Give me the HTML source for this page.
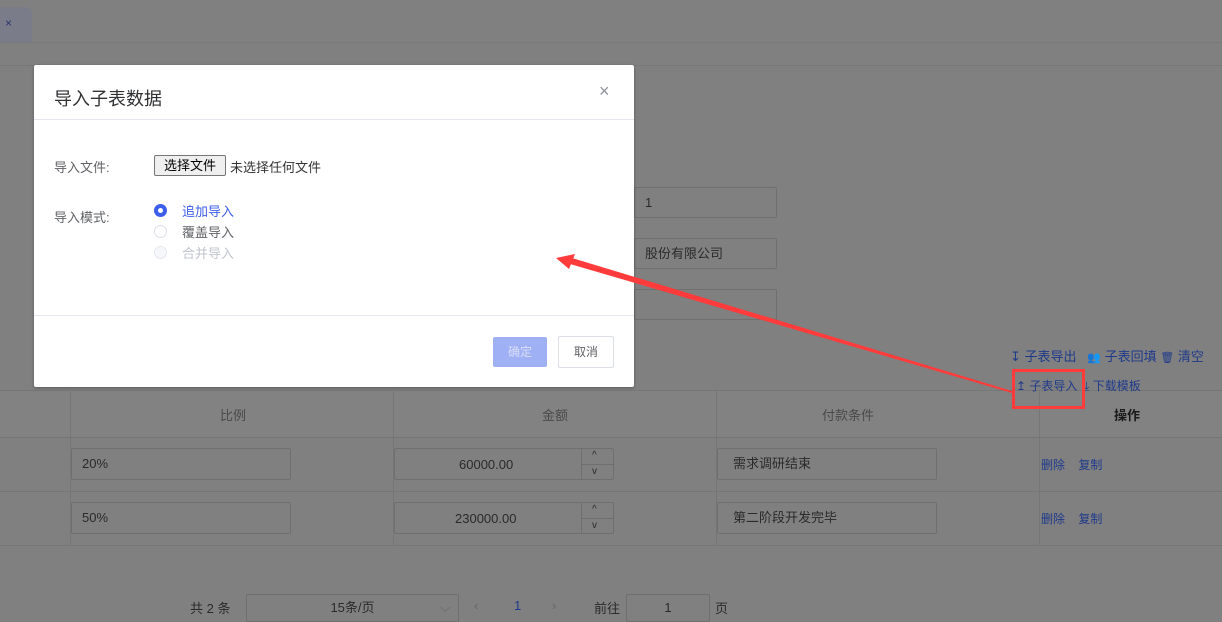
<!DOCTYPE html>
<html><head><meta charset="utf-8"><style>
*{box-sizing:border-box;margin:0;padding:0}
body{width:1222px;height:622px;overflow:hidden;background:#808080;font-family:"Liberation Sans","Noto Sans CJK SC",sans-serif;font-size:13px;color:#333;position:relative}
.a{position:absolute}
.inp{position:absolute;border:1px solid #6f6f6f;border-radius:2px;color:#2a2a2a;font-size:13px;line-height:29px;padding-left:10px}
.lnk{color:#1f3a8a}
.vl{position:absolute;width:1px;background:#767676}
.hl{position:absolute;height:1px;background:#767676;left:0;width:1222px}
</style></head><body>
<div class="a" style="left:0;top:7px;width:32px;height:36px;background:#7a7d89;border-radius:0 6px 0 0"></div>
<div class="a" style="left:5px;top:16px;color:#2a3570;font-size:12px">×</div>
<div class="hl" style="top:42px;background:#797979"></div>
<div class="hl" style="top:65px;background:#777"></div>

<div class="inp" style="left:634px;top:187px;width:143px;height:31px">1</div>
<div class="inp" style="left:634px;top:238px;width:143px;height:31px">股份有限公司</div>
<div class="inp" style="left:634px;top:289px;width:143px;height:31px"></div>

<div class="a" style="left:0;top:391px;width:1222px;height:46px;background:#828282"></div>
<div class="hl" style="top:390px"></div>
<div class="hl" style="top:437px"></div>
<div class="hl" style="top:491px"></div>
<div class="hl" style="top:545px"></div>
<div class="vl" style="left:70px;top:390px;height:155px"></div>
<div class="vl" style="left:393px;top:390px;height:155px"></div>
<div class="vl" style="left:716px;top:390px;height:155px"></div>
<div class="vl" style="left:1039px;top:390px;height:155px"></div>
<div class="a" style="left:220px;top:405px;color:#4a4a4a">比例</div>
<div class="a" style="left:542px;top:405px;color:#4a4a4a">金额</div>
<div class="a" style="left:822px;top:405px;color:#4a4a4a">付款条件</div>
<div class="a" style="left:1114px;top:405px;color:#1a1a1a;font-weight:bold">操作</div>

<div class="a lnk" style="left:1010px;top:346px;font-size:13px">↧ 子表导出 &nbsp; <span style="font-size:11px">👥</span> 子表回填 <span style="font-size:11px">🗑</span> 清空</div>
<div class="a lnk" style="left:1016px;top:377px;font-size:12px">↥ 子表导入 &nbsp;⤓ 下载模板</div>
<div class="a" style="left:1012px;top:369px;width:73px;height:40px;border:3px solid #ff3b3b"></div>

<div class="inp" style="left:71px;top:448px;width:220px;height:32px">20%</div>
<div class="inp" style="left:394px;top:448px;width:220px;height:32px;padding:0"><span class="a" style="left:64px;top:1px">60000.00</span><div class="a" style="left:186px;top:0;width:1px;height:30px;background:#6f6f6f"></div><div class="a" style="left:186px;top:15px;width:33px;height:1px;background:#6f6f6f"></div><span class="a" style="left:197px;top:-8px;font-size:10px">^</span><span class="a" style="left:197px;top:8px;font-size:10px">v</span></div>
<div class="inp" style="left:717px;top:448px;width:220px;height:32px;padding-left:15px">需求调研结束</div>
<div class="a lnk" style="left:1041px;top:456px;font-size:12px">删除 &nbsp;&nbsp; 复制</div>

<div class="inp" style="left:71px;top:502px;width:220px;height:32px">50%</div>
<div class="inp" style="left:394px;top:502px;width:220px;height:32px;padding:0"><span class="a" style="left:60px;top:1px">230000.00</span><div class="a" style="left:186px;top:0;width:1px;height:30px;background:#6f6f6f"></div><div class="a" style="left:186px;top:15px;width:33px;height:1px;background:#6f6f6f"></div><span class="a" style="left:197px;top:-8px;font-size:10px">^</span><span class="a" style="left:197px;top:8px;font-size:10px">v</span></div>
<div class="inp" style="left:717px;top:502px;width:220px;height:32px;padding-left:15px">第二阶段开发完毕</div>
<div class="a lnk" style="left:1041px;top:510px;font-size:12px">删除 &nbsp;&nbsp; 复制</div>

<div class="a" style="left:190px;top:598px;color:#2a2a2a">共 2 条</div>
<div class="inp" style="left:246px;top:594px;width:213px;height:28px;padding:0;line-height:26px;text-align:center">15条/页<span class="a" style="right:8px;top:0;color:#666">⌵</span></div>
<div class="a" style="left:474px;top:598px;color:#666">‹</div>
<div class="a" style="left:514px;top:598px;color:#1f3a8a">1</div>
<div class="a" style="left:552px;top:598px;color:#666">›</div>
<div class="a" style="left:594px;top:598px;color:#2a2a2a">前往</div>
<div class="inp" style="left:626px;top:594px;width:84px;height:28px;padding:0;line-height:26px;text-align:center">1</div>
<div class="a" style="left:715px;top:598px;color:#2a2a2a">页</div>

<div class="a" style="left:34px;top:65px;width:600px;height:322px;background:#fff;border-radius:2px;box-shadow:0 1px 3px rgba(0,0,0,.3)">
  <div class="a" style="left:20px;top:20px;font-size:18px;color:#303133">导入子表数据</div>
  <div class="a" style="left:565px;top:16px;font-size:18px;color:#909399">×</div>
  <div class="a" style="left:0;top:54px;width:600px;height:1px;background:#e4e7ed"></div>
  <div class="a" style="left:20px;top:92px;color:#606266">导入文件:</div>
  <div class="a" style="left:120px;top:90px;width:72px;height:21px;border:1px solid #767676;border-radius:2px;background:#efefef;color:#000;text-align:center;line-height:19px">选择文件</div>
  <div class="a" style="left:196px;top:92px;color:#333">未选择任何文件</div>
  <div class="a" style="left:20px;top:142px;color:#606266">导入模式:</div>
  <div class="a" style="left:120px;top:139px;width:13px;height:13px;border-radius:50%;background:#3c5eeb"><div class="a" style="left:4px;top:4px;width:5px;height:5px;border-radius:50%;background:#fff"></div></div>
  <div class="a" style="left:148px;top:136px;color:#3c5eeb">追加导入</div>
  <div class="a" style="left:120px;top:160px;width:13px;height:13px;border-radius:50%;border:1px solid #dcdfe6"></div>
  <div class="a" style="left:148px;top:157px;color:#606266">覆盖导入</div>
  <div class="a" style="left:120px;top:181px;width:13px;height:13px;border-radius:50%;border:1px solid #e4e7ed;background:#f5f7fa"></div>
  <div class="a" style="left:148px;top:178px;color:#c0c4cc">合并导入</div>
  <div class="a" style="left:0;top:250px;width:600px;height:1px;background:#e4e7ed"></div>
  <div class="a" style="left:459px;top:272px;width:54px;height:30px;background:#a0b0f5;color:#d8def8;text-align:center;line-height:30px;font-size:12px;border-radius:2px">确定</div>
  <div class="a" style="left:524px;top:271px;width:56px;height:32px;border:1px solid #dcdfe6;color:#606266;text-align:center;line-height:30px;font-size:12px;border-radius:2px">取消</div>
</div>

<svg class="a" style="left:0;top:0" width="1222" height="622">
<polygon points="1012,393 1012,391 572,258 570,264" fill="#ff3b3b"/>
<polygon points="556,258 575,254 569,269" fill="#ff3b3b"/>
</svg>
</body></html>
